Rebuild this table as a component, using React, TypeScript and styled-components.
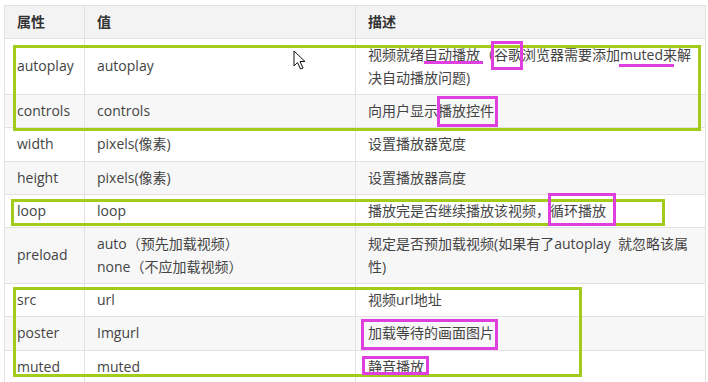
import React from "react";
import styled, { createGlobalStyle } from "styled-components";

const Global = createGlobalStyle`
  html, body { margin: 0; padding: 0; background: #ffffff; }
  body { font-family: "Open Sans", "Noto Sans CJK SC", sans-serif; }
`;

const Page = styled.div`
  position: relative;
  width: 708px;
  height: 382px;
  overflow: hidden;
  padding: 5px 3px 0 4px;
  box-sizing: border-box;
`;

const Table = styled.table`
  width: 701px;
  border-collapse: collapse;
  table-layout: fixed;
  font-size: 14px;
  line-height: 22.33px;
  color: #444;
`;

const Row = styled.tr<{ $alt?: boolean }>`
  background: ${(p) => (p.$alt ? "#f7f7f7" : "#ffffff")};
`;

const HeadRow = styled.tr`
  background: #f3f3f3;
`;

const Col = styled.col<{ $w: number }>`
  width: ${(p) => p.$w}px;
`;

const HeadCell = styled.th`
  text-align: left;
  font-weight: 700;
  color: #333;
  padding: 5px 12px;
  border: 1px solid #e2e2e2;
`;

const Cell = styled.td`
  padding: 5px 12px;
  border: 1px solid #e2e2e2;
  vertical-align: middle;
`;

const Box = styled.div<{ $color: "green" | "pink" }>`
  position: absolute;
  box-sizing: border-box;
  border: 3px solid ${(p) => (p.$color === "green" ? "#a3cb1c" : "#e03fe0")};
  pointer-events: none;
`;

const Underline = styled.div`
  position: absolute;
  height: 3px;
  background: #e03fe0;
  pointer-events: none;
`;

const Cursor = styled.svg`
  position: absolute;
  left: 293px;
  top: 50px;
`;

type R = { name: string; value: React.ReactNode; desc: React.ReactNode };

const rows: R[] = [
  {
    name: "autoplay",
    value: "autoplay",
    desc: "视频就绪自动播放（谷歌浏览器需要添加muted来解决自动播放问题)",
  },
  { name: "controls", value: "controls", desc: "向用户显示播放控件" },
  { name: "width", value: "pixels(像素)", desc: "设置播放器宽度" },
  { name: "height", value: "pixels(像素)", desc: "设置播放器高度" },
  { name: "loop", value: "loop", desc: "播放完是否继续播放该视频，循环播放" },
  {
    name: "preload",
    value: (
      <>
        auto（预先加载视频）
        <br />
        none（不应加载视频）
      </>
    ),
    desc: "规定是否预加载视频(如果有了autoplay\u00a0\u00a0就忽略该属性)",
  },
  { name: "src", value: "url", desc: "视频url地址" },
  { name: "poster", value: "Imgurl", desc: "加载等待的画面图片" },
  { name: "muted", value: "muted", desc: "静音播放" },
];

type Rect = { x: number; y: number; w: number; h: number };

const greens: Rect[] = [
  { x: 13, y: 45, w: 688, h: 86 },
  { x: 11, y: 199, w: 654, h: 27 },
  { x: 13, y: 287, w: 569, h: 90 },
];

const pinks: Rect[] = [
  { x: 491, y: 41, w: 32, h: 29 },
  { x: 437, y: 96, w: 61, h: 31 },
  { x: 548, y: 193, w: 68, h: 33 },
  { x: 361, y: 319, w: 137, h: 31 },
  { x: 362, y: 356, w: 67, h: 19 },
];

const lines: Rect[] = [
  { x: 424, y: 61, w: 59, h: 3 },
  { x: 619, y: 64, w: 55, h: 3 },
];

export default function App() {
  return (
    <>
      <Global />
      <Page>
        <Table>
          <colgroup>
            <Col $w={80} />
            <Col $w={271} />
            <Col $w={350} />
          </colgroup>
          <thead>
            <HeadRow>
              <HeadCell>属性</HeadCell>
              <HeadCell>值</HeadCell>
              <HeadCell>描述</HeadCell>
            </HeadRow>
          </thead>
          <tbody>
            {rows.map((r, i) => (
              <Row key={r.name} $alt={i % 2 === 1}>
                <Cell>{r.name}</Cell>
                <Cell>{r.value}</Cell>
                <Cell>{r.desc}</Cell>
              </Row>
            ))}
          </tbody>
        </Table>
        {greens.map((g, i) => (
          <Box key={`g${i}`} $color="green" style={{ left: g.x, top: g.y, width: g.w, height: g.h }} />
        ))}
        {pinks.map((g, i) => (
          <Box key={`p${i}`} $color="pink" style={{ left: g.x, top: g.y, width: g.w, height: g.h }} />
        ))}
        {lines.map((g, i) => (
          <Underline key={`l${i}`} style={{ left: g.x, top: g.y, width: g.w }} />
        ))}
        <Cursor width="14" height="21" viewBox="0 0 14 21">
          <path
            d="M1 1 L1 16 L4.5 12.5 L7.5 19 L10 18 L7 11.5 L12 11.5 Z"
            fill="#ffffff"
            stroke="#111"
            strokeWidth="1"
            strokeLinejoin="round"
          />
        </Cursor>
      </Page>
    </>
  );
}
